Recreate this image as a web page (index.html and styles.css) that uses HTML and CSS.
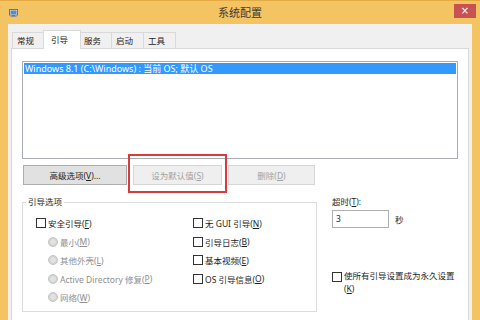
FILE: index.html
```html
<!DOCTYPE html>
<html lang="zh-CN">
<head>
<meta charset="utf-8">
<title>系统配置</title>
<link rel="stylesheet" href="styles.css">
</head>
<body>
<div class="window">
  <div class="titlebar">
    <div class="tb-left">
      <svg class="app-icon" width="9" height="8" viewBox="0 0 9 8">
        <rect x="0.5" y="0.5" width="8" height="5.5" fill="#dfe6ee" stroke="#6b7580"/>
        <rect x="1.5" y="1.5" width="6" height="3.5" fill="#4a8fd6"/>
        <rect x="3" y="6" width="3" height="1" fill="#6b7580"/>
        <rect x="1.5" y="7" width="6" height="1" fill="#8a939c"/>
      </svg>
    </div>
    <div class="title">系统配置</div>
    <div class="tb-right"><div class="close">×</div></div>
  </div>
  <div class="client">
    <div class="tabs">
      <div class="tab">常规</div>
      <div class="tab active">引导</div>
      <div class="tab">服务</div>
      <div class="tab">启动</div>
      <div class="tab">工具</div>
    </div>
    <div class="panel">
      <div class="listbox">
        <div class="item sel">Windows 8.1 (C:\Windows) : 当前 OS; 默认 OS</div>
      </div>
      <div class="buttons">
        <div class="btn btn-adv">高级选项(<u>V</u>)...</div>
        <div class="btn btn-default disabled">设为默认值(<u>S</u>)</div>
        <div class="btn btn-del disabled">删除(<u>D</u>)</div>
      </div>
      <div class="lower">
        <fieldset class="group">
          <legend>引导选项</legend>
          <div class="opts">
            <div class="col">
              <div class="opt"><span class="chk"></span>安全引导(<u>F</u>)</div>
              <div class="opt sub disabled"><span class="radio"></span>最小(<u>M</u>)</div>
              <div class="opt sub disabled"><span class="radio"></span>其他外壳(<u>L</u>)</div>
              <div class="opt sub disabled"><span class="radio"></span>Active Directory 修复(<u>P</u>)</div>
              <div class="opt sub disabled"><span class="radio"></span>网络(<u>W</u>)</div>
            </div>
            <div class="col">
              <div class="opt"><span class="chk"></span>无 GUI 引导(<u>N</u>)</div>
              <div class="opt"><span class="chk"></span>引导日志(<u>B</u>)</div>
              <div class="opt"><span class="chk"></span>基本视频(<u>E</u>)</div>
              <div class="opt"><span class="chk"></span>OS 引导信息(<u>O</u>)</div>
            </div>
          </div>
        </fieldset>
        <div class="side">
          <div class="label">超时(<u>T</u>):</div>
          <div class="timeout-row">
            <div class="textbox">3</div>
            <span>秒</span>
          </div>
          <div class="perm">
            <span class="chk"></span>
            <span class="perm-text"><span class="perm-line">使所有引导设置成为永久设置</span><span class="perm-line">(<u>K</u>)</span></span>
          </div>
        </div>
      </div>
      <div class="highlight"></div>
    </div>
  </div>
</div>
</body>
</html>
```

FILE: styles.css
```css
html, body {
  margin: 0;
  padding: 0;
}

body {
  background: #f4c462;
  font-family: "Noto Sans", "Noto Sans CJK SC", sans-serif;
  font-size: 8.5px;
  color: #1e1e1e;
}

.window {
  width: 480px;
  height: 320px;
  box-sizing: border-box;
  border-top: 1px solid #e3aa45;
  display: flex;
  flex-direction: column;
  overflow: hidden;
}

/* title bar */
.titlebar {
  height: 23px;
  flex: none;
  display: grid;
  grid-template-columns: 1fr auto 1fr;
  align-items: center;
}

.tb-left {
  padding-left: 9px;
  display: flex;
  align-items: center;
}

.app-icon {
  display: block;
}

.title {
  font-size: 11px;
  color: #3a3a3a;
  line-height: 14px;
  padding-top: 1px;
}

.tb-right {
  align-self: start;
  display: flex;
  justify-content: flex-end;
  padding-top: 3px;
  padding-right: 4px;
}

.close {
  width: 22px;
  height: 14px;
  background: #c85151;
  color: #fff;
  font-family: "DejaVu Sans", sans-serif;
  font-size: 10px;
  line-height: 14px;
  text-align: center;
}

/* client area */
.client {
  flex: 1;
  min-height: 0;
  margin: 0 8px;
  background: #f0f0f0;
  padding: 6px 3px 0;
  display: flex;
  flex-direction: column;
}

.tabs {
  display: flex;
  align-items: flex-end;
  height: 19px;
  margin-bottom: -1px;
  padding-left: 1px;
  position: relative;
  z-index: 1;
}

.tab {
  box-sizing: border-box;
  width: 33px;
  height: 16px;
  margin-bottom: 1px;
  padding-left: 4px;
  border: 1px solid #d9d9d9;
  border-bottom: 0;
  margin-right: -1px;
  background: #f0f0f0;
  line-height: 15px;
  color: #1e1e1e;
}

.tab.active {
  width: 38px;
  height: 19px;
  margin: 0 -2px 0 -1px;
  padding-left: 7px;
  background: #fff;
  line-height: 17px;
  position: relative;
  z-index: 2;
}

.panel {
  flex: 1;
  background: #fff;
  border: 1px solid #d9d9d9;
  border-bottom: 0;
  padding: 12px 10px 0;
  position: relative;
}

.listbox {
  box-sizing: border-box;
  height: 98px;
  border: 1px solid #a9acb3;
  padding: 1px;
}

.item {
  height: 11px;
  line-height: 11px;
  padding-left: 1px;
  white-space: nowrap;
  font-size: 9px;
}

.item.sel {
  background: #3399ff;
  color: #fff;
}

/* buttons */
.buttons {
  display: flex;
  margin-top: 6px;
}

.btn {
  box-sizing: border-box;
  height: 20px;
  border: 1px solid #adadad;
  background: #e1e1e1;
  display: flex;
  align-items: center;
  justify-content: center;
  color: #1e1e1e;
}

.btn.disabled {
  background: #efefef;
  border-color: #d6d6d6;
  color: #a2a2a2;
}

.btn-adv {
  width: 104px;
  margin-left: 1px;
}

.btn-default {
  width: 89px;
  margin-left: 6px;
}

.btn-del {
  width: 87px;
  margin-left: 6px;
}

/* lower area */
.lower {
  display: flex;
  margin-top: 11px;
}

.group {
  box-sizing: border-box;
  width: 295px;
  margin: 0;
  padding: 0 0 4px;
  border: 1px solid #dcdcdc;
}

.group legend {
  margin-left: 3px;
  padding: 0 2px;
  line-height: 12px;
  color: #1e1e1e;
}

.opts {
  display: grid;
  grid-template-columns: 157px 1fr;
  padding: 6px 0 0 13px;
}

.opt {
  height: 18.5px;
  display: flex;
  align-items: center;
  white-space: nowrap;
}

.opt.sub {
  padding-left: 12px;
}

.opt.disabled {
  color: #8e8e8e;
}

.chk {
  box-sizing: border-box;
  width: 10px;
  height: 10px;
  border: 1px solid #333;
  background: #fff;
  margin-right: 2px;
  flex: none;
}

.radio {
  box-sizing: border-box;
  width: 10px;
  height: 10px;
  border-radius: 50%;
  border: 1px solid #c4c4c4;
  background: radial-gradient(circle, #e2e2e2 0 2.5px, #d4d4d4 3px);
  margin-right: 2px;
  flex: none;
}

.side {
  margin-left: 15px;
  flex: 1;
  display: flex;
  flex-direction: column;
}

.side .label {
  line-height: 12px;
}

.timeout-row {
  display: flex;
  align-items: center;
  margin-top: 2px;
}

.textbox {
  box-sizing: border-box;
  width: 57px;
  height: 18px;
  border: 1px solid #abadb3;
  padding-left: 3px;
  line-height: 16px;
  margin-right: 6px;
}

.perm {
  display: flex;
  align-items: flex-start;
  margin-top: 42px;
}

.perm .chk {
  margin-top: 1.5px;
}

.perm-text {
  display: flex;
  flex-direction: column;
  line-height: 12.5px;
}

.perm-line {
  display: block;
  white-space: nowrap;
}

/* annotation over the default button */
.highlight {
  position: absolute;
  left: 116px;
  top: 105px;
  width: 99px;
  height: 39px;
  box-sizing: border-box;
  border: 2px solid #d53c3c;
}
```
